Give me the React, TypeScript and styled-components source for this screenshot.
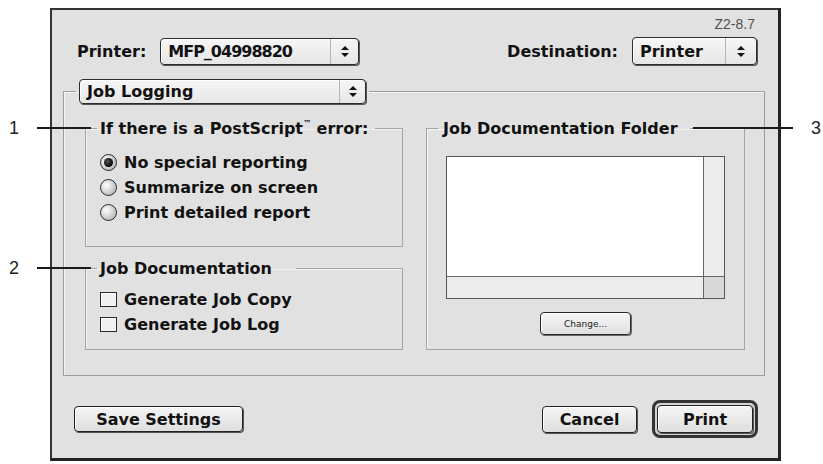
import { FC, ReactNode } from 'react';
import styled, { createGlobalStyle } from 'styled-components';

const GlobalStyle = createGlobalStyle`
  body {
    margin: 0;
    background: #ffffff;
    font-family: "DejaVu Sans", "Noto Sans", sans-serif;
    color: #121212;
  }
`;

const Page = styled.div`
  position: relative;
  width: 823px;
  height: 464px;
  box-sizing: border-box;
  padding: 8px 0 0 50px;
  overflow: hidden;
`;

const Window = styled.div`
  width: 731px;
  height: 453px;
  box-sizing: border-box;
  border: 2px solid #333;
  border-right: 3px solid #222;
  border-bottom: 3px solid #222;
  background: #e1e1e1;
  display: flex;
  flex-direction: column;
  padding: 8px 13px 0 11px;
`;

const Version = styled.div`
  align-self: flex-end;
  margin-right: 10px;
  font-family: "Liberation Sans", Arial, sans-serif;
  font-size: 14px;
  line-height: 13px;
  color: #505050;
`;

const TopRow = styled.div`
  display: flex;
  justify-content: space-between;
  align-items: center;
  margin-top: 6px;
  padding: 0 8px 0 14px;
  height: 28px;
`;

const Field = styled.div`
  display: flex;
  align-items: center;
  gap: 14px;
`;

const Label = styled.span`
  font-size: 16px;
  font-weight: bold;
`;

const PopupBox = styled.div<{ $width: number; $height: number }>`
  width: ${(p) => p.$width}px;
  height: ${(p) => p.$height}px;
  box-sizing: border-box;
  display: flex;
  align-items: stretch;
  border: 1px solid #2c2c2c;
  border-radius: 4px;
  background: linear-gradient(#f6f6f6, #e6e6e6);
  box-shadow: 1px 1px 0 #555, inset 1px 1px 0 #fff;
`;

const PopupText = styled.span<{ $spacing: number }>`
  flex: 1;
  display: flex;
  align-items: center;
  padding-left: 7px;
  font-size: 16px;
  font-weight: bold;
  letter-spacing: ${(p) => p.$spacing}px;
  white-space: nowrap;
`;

const ArrowCell = styled.span<{ $width: number }>`
  width: ${(p) => p.$width}px;
  display: flex;
  align-items: center;
  justify-content: center;
  border-left: 1px solid #b4b4b4;
`;

const Arrows = () => (
  <svg width="8" height="11" viewBox="0 0 8 11">
    <path d="M4 0 L8 4 L0 4 Z" fill="#111" />
    <path d="M0 7 L8 7 L4 11 Z" fill="#111" />
  </svg>
);

const Popup: FC<{
  width: number;
  height: number;
  arrow: number;
  spacing?: number;
  children: ReactNode;
}> = ({ width, height, arrow, spacing = 0, children }) => (
  <PopupBox $width={width} $height={height}>
    <PopupText $spacing={spacing}>{children}</PopupText>
    <ArrowCell $width={arrow}>
      <Arrows />
    </ArrowCell>
  </PopupBox>
);

const Frame = styled.fieldset`
  margin: 14px 0 0;
  padding: 0;
  border: 1px solid #9c9c9c;
  box-shadow: inset 1px 1px 0 #f4f4f4;
  min-width: 0;
`;

const FrameLegend = styled.legend`
  margin-left: 12px;
  padding: 0 3px;
`;

const Columns = styled.div`
  display: grid;
  grid-template-columns: 318px 319px;
  column-gap: 23px;
  padding: 16px 19px 25px 21px;
`;

const LeftColumn = styled.div`
  display: flex;
  flex-direction: column;
  gap: 13px;
`;

const Group = styled.fieldset<{ $pt: number; $pb: number; $grow?: boolean }>`
  margin: 0;
  padding: ${(p) => p.$pt}px 0 ${(p) => p.$pb}px 14px;
  border: 1px solid #a4a4a4;
  box-shadow: inset 1px 1px 0 #f2f2f2;
  min-width: 0;
  flex: ${(p) => (p.$grow ? 1 : 'none')};
  display: flex;
  flex-direction: column;
`;

const GroupTitle = styled.legend<{ $pl: number; $pr: number }>`
  margin-left: -3px;
  padding: 0 ${(p) => p.$pr}px 0 ${(p) => p.$pl}px;
  font-size: 16px;
  font-weight: bold;
  line-height: 17px;
  white-space: nowrap;
`;

const Trademark = styled.span`
  font-size: 8px;
  line-height: 1;
  vertical-align: top;
`;

const OptionRow = styled.div`
  height: 25px;
  display: flex;
  align-items: center;
  gap: 7px;
  font-size: 16px;
  font-weight: bold;
  white-space: nowrap;
`;

const Radio = styled.span<{ $on?: boolean }>`
  width: 17px;
  height: 17px;
  box-sizing: border-box;
  border-radius: 50%;
  border: 1px solid #2a2a2a;
  background: radial-gradient(circle at 35% 35%, #ffffff, #bdbdbd 75%);
  display: flex;
  align-items: center;
  justify-content: center;
  &::after {
    content: '';
    display: ${(p) => (p.$on ? 'block' : 'none')};
    width: 9px;
    height: 9px;
    border-radius: 50%;
    background: radial-gradient(circle at 40% 40%, #555, #000 70%);
  }
`;

const Check = styled.span`
  width: 17px;
  height: 15px;
  box-sizing: border-box;
  border: 1px solid #2a2a2a;
  background: #f1f1f1;
  box-shadow: inset 1px 1px 0 #fff;
`;

const ListBox = styled.div`
  margin: 19px 0 0 5px;
  width: 279px;
  height: 143px;
  box-sizing: border-box;
  border: 1px solid #555;
  display: grid;
  grid-template-columns: 1fr 21px;
  grid-template-rows: 1fr 22px;
`;

const ListArea = styled.div`
  background: #ffffff;
`;

const Track = styled.div<{ $side: 'left' | 'top' }>`
  background: #ececec;
  border-${(p) => p.$side}: 1px solid #666;
`;

const Corner = styled.div`
  background: #d8d8d8;
  border-left: 1px solid #666;
  border-top: 1px solid #666;
`;

const SmallButton = styled.button`
  align-self: center;
  margin: 13px 0 0 -14px;
  width: 91px;
  height: 23px;
  box-sizing: border-box;
  border: 1px solid #2a2a2a;
  border-radius: 4px;
  background: linear-gradient(#f6f6f6, #e0e0e0);
  box-shadow: 1px 1px 0 #666, inset 1px 1px 0 #fff;
  font-family: "DejaVu Sans", sans-serif;
  font-size: 9px;
  color: #222;
  padding: 0;
`;

const ButtonRow = styled.div`
  margin-top: 24px;
  height: 38px;
  display: flex;
  align-items: center;
  justify-content: space-between;
  padding: 0 7px 0 11px;
`;

const RightButtons = styled.div`
  display: flex;
  align-items: center;
  gap: 15px;
`;

const Button = styled.button<{ $width: number; $height: number }>`
  width: ${(p) => p.$width}px;
  height: ${(p) => p.$height}px;
  box-sizing: border-box;
  border: 1px solid #222;
  border-radius: 4px;
  background: linear-gradient(#f5f5f5, #dedede);
  box-shadow: 1px 1px 0 #555, inset 1px 1px 0 #fff;
  font-family: "DejaVu Sans", sans-serif;
  font-size: 16px;
  font-weight: bold;
  color: #121212;
  padding: 0;
`;

const DefaultRing = styled.div`
  padding: 2px;
  border: 3px solid #333;
  border-radius: 8px;
  background: #d4d4d4;
  display: flex;
`;

const Callout = styled.div<{ $top: number; $left: number }>`
  position: absolute;
  top: ${(p) => p.$top}px;
  left: ${(p) => p.$left}px;
  display: flex;
  align-items: center;
  gap: 18px;
  font-family: "Liberation Sans", Arial, sans-serif;
  font-size: 18px;
  line-height: 20px;
  color: #222;
`;

const CalloutLine = styled.span<{ $width: number }>`
  width: ${(p) => p.$width}px;
  height: 2px;
  background: #1a1a1a;
`;

const App: FC = () => {
  return (
    <>
      <GlobalStyle />
      <Page>
        <Window>
          <Version>Z2-8.7</Version>
          <TopRow>
            <Field>
              <Label>Printer:</Label>
              <Popup width={199} height={27} arrow={27} spacing={-1}>
                MFP_04998820
              </Popup>
            </Field>
            <Field>
              <Label>Destination:</Label>
              <Popup width={125} height={28} arrow={30}>
                Printer
              </Popup>
            </Field>
          </TopRow>

          <Frame>
            <FrameLegend>
              <Popup width={287} height={25} arrow={25}>
                Job Logging
              </Popup>
            </FrameLegend>
            <Columns>
              <LeftColumn>
                <Group $pt={13} $pb={21}>
                  <GroupTitle $pl={3} $pr={6}>
                    If there is a PostScript<Trademark>™</Trademark> error:
                  </GroupTitle>
                  <OptionRow>
                    <Radio $on />
                    No special reporting
                  </OptionRow>
                  <OptionRow>
                    <Radio />
                    Summarize on screen
                  </OptionRow>
                  <OptionRow>
                    <Radio />
                    Print detailed report
                  </OptionRow>
                </Group>
                <Group $pt={10} $pb={11} $grow>
                  <GroupTitle $pl={3} $pr={24}>
                    Job Documentation
                  </GroupTitle>
                  <OptionRow>
                    <Check />
                    Generate Job Copy
                  </OptionRow>
                  <OptionRow>
                    <Check />
                    Generate Job Log
                  </OptionRow>
                </Group>
              </LeftColumn>

              <Group $pt={0} $pb={14}>
                <GroupTitle $pl={5} $pr={12}>
                  Job Documentation Folder
                </GroupTitle>
                <ListBox>
                  <ListArea />
                  <Track $side="left" />
                  <Track $side="top" />
                  <Corner />
                </ListBox>
                <SmallButton>Change...</SmallButton>
              </Group>
            </Columns>
          </Frame>

          <ButtonRow>
            <Button $width={169} $height={26}>
              Save Settings
            </Button>
            <RightButtons>
              <Button $width={95} $height={27}>
                Cancel
              </Button>
              <DefaultRing>
                <Button $width={96} $height={28}>
                  Print
                </Button>
              </DefaultRing>
            </RightButtons>
          </ButtonRow>
        </Window>

        <Callout $top={118} $left={9}>
          1
          <CalloutLine $width={54} />
        </Callout>
        <Callout $top={258} $left={9}>
          2
          <CalloutLine $width={54} />
        </Callout>
        <Callout $top={118} $left={693}>
          <CalloutLine $width={100} />
          3
        </Callout>
      </Page>
    </>
  );
};

export default App;
